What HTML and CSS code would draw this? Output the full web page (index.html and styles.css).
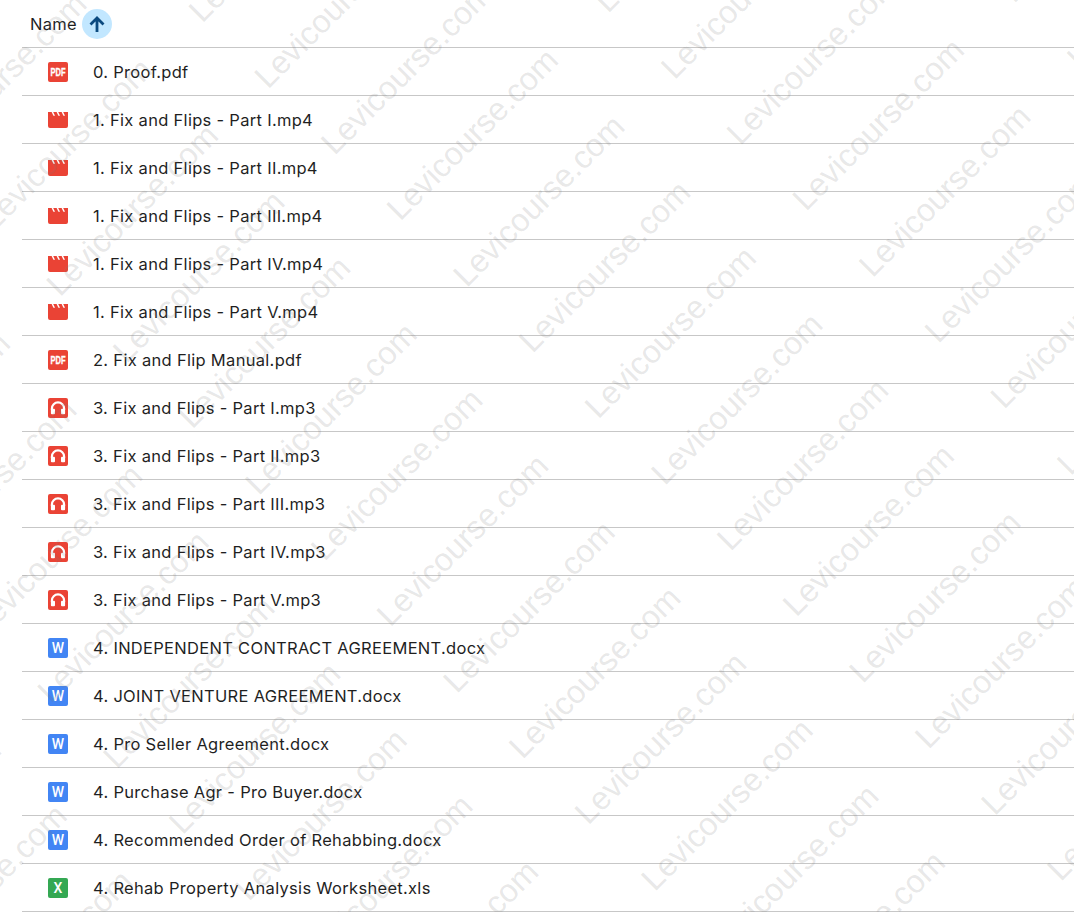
FILE: index.html
```html
<!DOCTYPE html>
<html lang="en">
<head>
    <meta charset="UTF-8">
    <title>Fix and Flips</title>
    <link rel="stylesheet" href="styles.css">
</head>
<body>
    <!-- Icon sprites -->
    <svg class="sprites" aria-hidden="true">
        <symbol id="icon-pdf" viewBox="0 0 20 20">
            <rect width="20" height="20" rx="2" fill="#ea4335"/>
            <text x="10" y="13.7" class="glyph-pdf" textLength="15" lengthAdjust="spacingAndGlyphs">PDF</text>
        </symbol>
        <symbol id="icon-video" viewBox="0 0 20 20">
            <path d="M0 2h3.6l1.8 3.8H7L5.2 2h3.4l1.8 3.8H12L10.2 2h3.4l1.8 3.8H17L15.2 2H20v14a2 2 0 0 1-2 2H2a2 2 0 0 1-2-2z" fill="#ea4335"/>
        </symbol>
        <symbol id="icon-audio" viewBox="0 0 20 20">
            <rect width="20" height="20" rx="2" fill="#ea4335"/>
            <path d="M3.9 12v-1.5a6.1 6.1 0 0 1 12.2 0V12" fill="none" stroke="#fff" stroke-width="2.2"/>
            <rect x="2.9" y="10.8" width="4.1" height="5.4" rx="1" fill="#fff"/>
            <rect x="13" y="10.8" width="4.1" height="5.4" rx="1" fill="#fff"/>
        </symbol>
        <symbol id="icon-word" viewBox="0 0 20 20">
            <rect width="20" height="20" rx="2" fill="#4285f4"/>
            <text x="10" y="15.2" class="glyph-letter">W</text>
        </symbol>
        <symbol id="icon-excel" viewBox="0 0 20 20">
            <rect width="20" height="20" rx="2" fill="#34a853"/>
            <text x="10" y="15.2" class="glyph-letter">X</text>
        </symbol>
    </svg>

    <div class="file-list">
        <div class="list-head">
            <span class="head-label">Name</span>
            <span class="sort-btn">
                <svg viewBox="0 0 24 24" width="24" height="24"><path d="M12 20V6M5.5 12.5 12 6l6.5 6.5" fill="none" stroke="currentColor" stroke-width="2.8"/></svg>
            </span>
        </div>
        <div class="file-row"><svg class="file-icon"><use href="#icon-pdf"/></svg><span class="file-name">0. Proof.pdf</span></div>
        <div class="file-row"><svg class="file-icon"><use href="#icon-video"/></svg><span class="file-name">1. Fix and Flips - Part I.mp4</span></div>
        <div class="file-row"><svg class="file-icon"><use href="#icon-video"/></svg><span class="file-name">1. Fix and Flips - Part II.mp4</span></div>
        <div class="file-row"><svg class="file-icon"><use href="#icon-video"/></svg><span class="file-name">1. Fix and Flips - Part III.mp4</span></div>
        <div class="file-row"><svg class="file-icon"><use href="#icon-video"/></svg><span class="file-name">1. Fix and Flips - Part IV.mp4</span></div>
        <div class="file-row"><svg class="file-icon"><use href="#icon-video"/></svg><span class="file-name">1. Fix and Flips - Part V.mp4</span></div>
        <div class="file-row"><svg class="file-icon"><use href="#icon-pdf"/></svg><span class="file-name">2. Fix and Flip Manual.pdf</span></div>
        <div class="file-row"><svg class="file-icon"><use href="#icon-audio"/></svg><span class="file-name">3. Fix and Flips - Part I.mp3</span></div>
        <div class="file-row"><svg class="file-icon"><use href="#icon-audio"/></svg><span class="file-name">3. Fix and Flips - Part II.mp3</span></div>
        <div class="file-row"><svg class="file-icon"><use href="#icon-audio"/></svg><span class="file-name">3. Fix and Flips - Part III.mp3</span></div>
        <div class="file-row"><svg class="file-icon"><use href="#icon-audio"/></svg><span class="file-name">3. Fix and Flips - Part IV.mp3</span></div>
        <div class="file-row"><svg class="file-icon"><use href="#icon-audio"/></svg><span class="file-name">3. Fix and Flips - Part V.mp3</span></div>
        <div class="file-row"><svg class="file-icon"><use href="#icon-word"/></svg><span class="file-name">4. INDEPENDENT CONTRACT AGREEMENT.docx</span></div>
        <div class="file-row"><svg class="file-icon"><use href="#icon-word"/></svg><span class="file-name">4. JOINT VENTURE AGREEMENT.docx</span></div>
        <div class="file-row"><svg class="file-icon"><use href="#icon-word"/></svg><span class="file-name">4. Pro Seller Agreement.docx</span></div>
        <div class="file-row"><svg class="file-icon"><use href="#icon-word"/></svg><span class="file-name">4. Purchase Agr - Pro Buyer.docx</span></div>
        <div class="file-row"><svg class="file-icon"><use href="#icon-word"/></svg><span class="file-name">4. Recommended Order of Rehabbing.docx</span></div>
        <div class="file-row"><svg class="file-icon"><use href="#icon-excel"/></svg><span class="file-name">4. Rehab Property Analysis Worksheet.xls</span></div>
    </div>

    <!-- Watermark -->
    <div class="watermark" aria-hidden="true">
        <div class="wm-row"><span>Levicourse.com</span><span>Levicourse.com</span><span>Levicourse.com</span><span>Levicourse.com</span><span>Levicourse.com</span><span>Levicourse.com</span></div>
        <div class="wm-row"><span>Levicourse.com</span><span>Levicourse.com</span><span>Levicourse.com</span><span>Levicourse.com</span><span>Levicourse.com</span><span>Levicourse.com</span></div>
        <div class="wm-row"><span>Levicourse.com</span><span>Levicourse.com</span><span>Levicourse.com</span><span>Levicourse.com</span><span>Levicourse.com</span><span>Levicourse.com</span></div>
        <div class="wm-row"><span>Levicourse.com</span><span>Levicourse.com</span><span>Levicourse.com</span><span>Levicourse.com</span><span>Levicourse.com</span><span>Levicourse.com</span></div>
        <div class="wm-row"><span>Levicourse.com</span><span>Levicourse.com</span><span>Levicourse.com</span><span>Levicourse.com</span><span>Levicourse.com</span><span>Levicourse.com</span></div>
        <div class="wm-row"><span>Levicourse.com</span><span>Levicourse.com</span><span>Levicourse.com</span><span>Levicourse.com</span><span>Levicourse.com</span><span>Levicourse.com</span></div>
        <div class="wm-row"><span>Levicourse.com</span><span>Levicourse.com</span><span>Levicourse.com</span><span>Levicourse.com</span><span>Levicourse.com</span><span>Levicourse.com</span></div>
        <div class="wm-row"><span>Levicourse.com</span><span>Levicourse.com</span><span>Levicourse.com</span><span>Levicourse.com</span><span>Levicourse.com</span><span>Levicourse.com</span></div>
        <div class="wm-row"><span>Levicourse.com</span><span>Levicourse.com</span><span>Levicourse.com</span><span>Levicourse.com</span><span>Levicourse.com</span><span>Levicourse.com</span></div>
        <div class="wm-row"><span>Levicourse.com</span><span>Levicourse.com</span><span>Levicourse.com</span><span>Levicourse.com</span><span>Levicourse.com</span><span>Levicourse.com</span></div>
        <div class="wm-row"><span>Levicourse.com</span><span>Levicourse.com</span><span>Levicourse.com</span><span>Levicourse.com</span><span>Levicourse.com</span><span>Levicourse.com</span></div>
        <div class="wm-row"><span>Levicourse.com</span><span>Levicourse.com</span><span>Levicourse.com</span><span>Levicourse.com</span><span>Levicourse.com</span><span>Levicourse.com</span></div>
        <div class="wm-row"><span>Levicourse.com</span><span>Levicourse.com</span><span>Levicourse.com</span><span>Levicourse.com</span><span>Levicourse.com</span><span>Levicourse.com</span></div>
        <div class="wm-row"><span>Levicourse.com</span><span>Levicourse.com</span><span>Levicourse.com</span><span>Levicourse.com</span><span>Levicourse.com</span><span>Levicourse.com</span></div>
        <div class="wm-row"><span>Levicourse.com</span><span>Levicourse.com</span><span>Levicourse.com</span><span>Levicourse.com</span><span>Levicourse.com</span><span>Levicourse.com</span></div>
        <div class="wm-row"><span>Levicourse.com</span><span>Levicourse.com</span><span>Levicourse.com</span><span>Levicourse.com</span><span>Levicourse.com</span><span>Levicourse.com</span></div>
        <div class="wm-row"><span>Levicourse.com</span><span>Levicourse.com</span><span>Levicourse.com</span><span>Levicourse.com</span><span>Levicourse.com</span><span>Levicourse.com</span></div>
    </div>
</body>
</html>
```

FILE: styles.css
```css
* {
    box-sizing: border-box;
    margin: 0;
    padding: 0;
}

html, body {
    height: 912px;
    overflow: hidden;
}

body {
    position: relative;
    background: #fff;
    color: #1f1f1f;
    font-family: Inter, 'Liberation Sans', sans-serif;
    font-size: 16.5px;
    letter-spacing: 0.3px;
}

.sprites {
    display: none;
}

/* Lista de arquivos */
.file-list {
    margin-left: 22px;
}

.list-head {
    display: flex;
    align-items: center;
    height: 48px;
    padding-left: 8px;
    border-bottom: 1px solid #c7c7c7;
}

.head-label {
    margin-right: 5px;
}

.sort-btn {
    display: flex;
    align-items: center;
    justify-content: center;
    width: 30px;
    height: 30px;
    border-radius: 50%;
    background: #c2e7ff;
    color: #0b4a7f;
}

.file-row {
    display: flex;
    align-items: center;
    height: 48px;
    padding-left: 26px;
    border-bottom: 1px solid #c7c7c7;
}

.file-icon {
    flex: none;
    width: 20px;
    height: 20px;
    margin-right: 25px;
}

.glyph-pdf {
    font-family: 'Liberation Sans', sans-serif;
    font-size: 10px;
    font-weight: bold;
    letter-spacing: 0;
    fill: #fff;
    stroke: #fff;
    stroke-width: 0.3px;
    text-anchor: middle;
}

.glyph-letter {
    font-family: Roboto, sans-serif;
    font-size: 14px;
    font-weight: 500;
    letter-spacing: 0;
    fill: #fff;
    text-anchor: middle;
}

/* Marca d'agua: grade girada por cima da lista */
.watermark {
    position: absolute;
    left: -594px;
    top: 475px;
    transform: rotate(-45deg);
    transform-origin: 0 0;
    pointer-events: none;
}

.wm-row {
    display: flex;
    height: 93.4px;
    align-items: center;
}

.wm-row span {
    flex: none;
    width: 294px;
    font-family: 'Liberation Sans', sans-serif;
    font-size: 32.3px;
    letter-spacing: 0;
    color: rgba(120, 120, 120, 0.18);
}
```
